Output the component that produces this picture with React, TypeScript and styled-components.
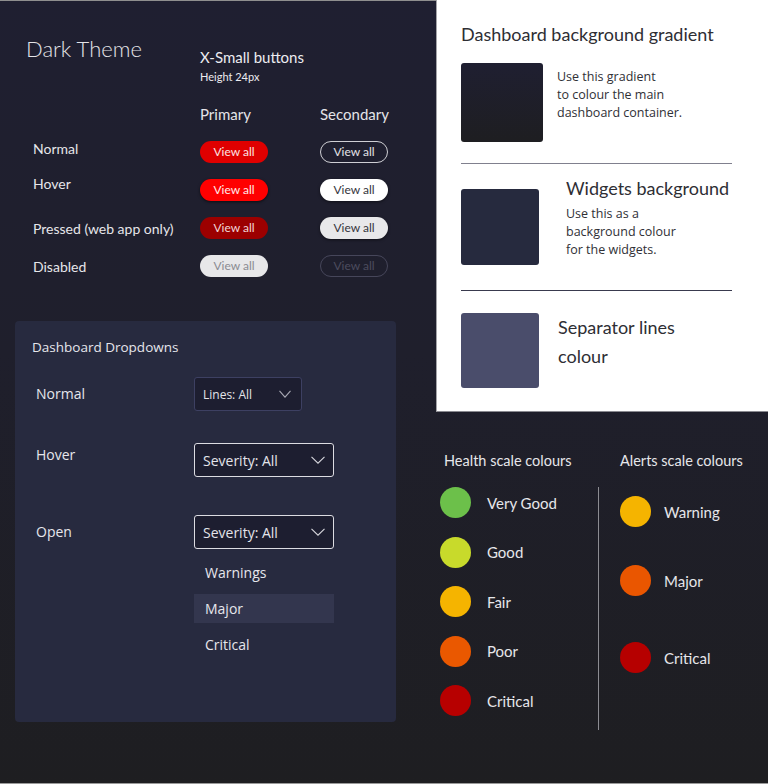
import { Fragment } from "react";
import styled, { createGlobalStyle, css } from "styled-components";

const GlobalStyle = createGlobalStyle`
  html, body {
    margin: 0;
    padding: 0;
  }
  body {
    width: 768px;
    height: 784px;
    overflow: hidden;
    font-family: Lato, "Liberation Sans", sans-serif;
  }
`;

const Page = styled.div`
  display: grid;
  grid-template-columns: 436px 332px;
  grid-template-rows: 412px 1fr;
  width: 768px;
  height: 784px;
  box-sizing: border-box;
  border-bottom: 1px solid #9a9a9a;
  background: linear-gradient(180deg, #1f1f31 0%, #1f1f2c 45%, #1e1e21 100%);
`;

const LeftColumn = styled.div`
  grid-row: 1 / 3;
  grid-column: 1;
  display: flex;
  flex-direction: column;
  border-top: 1px solid #8f8f8f;
`;

/* ---- buttons ---- */

const Header = styled.div`
  display: grid;
  grid-template-columns: 174px 1fr;
  padding: 35px 0 0 26px;
`;

const PageTitle = styled.h1`
  margin: 0;
  font-size: 22px;
  line-height: 26px;
  font-weight: 300;
  color: #e4e4e8;
`;

const SubBlock = styled.div`
  margin-top: 12px;
  color: #ececf0;
`;

const SubTitle = styled.div`
  font-size: 15px;
  line-height: 18px;
`;

const SubNote = styled.div`
  margin-top: 4px;
  font-size: 11px;
  line-height: 14px;
`;

const ButtonGrid = styled.div`
  display: grid;
  grid-template-columns: 174px 120px 120px;
  grid-template-rows: auto;
  grid-auto-rows: 22px;
  row-gap: 16px;
  padding-left: 26px;
`;

const ColumnHead = styled.div`
  margin: 21px 0 2px;
  font-size: 15px;
  line-height: 18px;
  color: #e4e4e8;
`;

const StateLabel = styled.div<{ $top: number }>`
  margin-top: ${(p) => p.$top}px;
  padding-left: 7px;
  font-size: 14px;
  line-height: 18px;
  white-space: nowrap;
  color: #e6e6ea;
`;

type Variant = "primary" | "secondary";
type BtnState = "normal" | "hover" | "pressed" | "disabled";

const buttonLooks: Record<Variant, Record<BtnState, ReturnType<typeof css>>> = {
  primary: {
    normal: css`
      background: #e00000;
      color: #fbe3e3;
    `,
    hover: css`
      background: #ff0000;
      color: #ffe9e9;
      box-shadow: 0 1px 3px rgba(0, 0, 0, 0.6);
    `,
    pressed: css`
      background: #9c0000;
      color: #f1d6d6;
    `,
    disabled: css`
      background: #e7e7e9;
      color: #8b8b92;
    `,
  },
  secondary: {
    normal: css`
      background: transparent;
      border: 1px solid #cfcfd4;
      color: #e2e2e6;
    `,
    hover: css`
      background: #ffffff;
      color: #35353d;
      box-shadow: 0 1px 3px rgba(0, 0, 0, 0.5);
    `,
    pressed: css`
      background: #e8e8ea;
      color: #35353d;
      box-shadow: 0 1px 3px rgba(0, 0, 0, 0.5);
    `,
    disabled: css`
      background: transparent;
      border: 1px solid #46465a;
      color: #4c4c5e;
    `,
  },
};

const ViewButton = styled.button<{ $variant: Variant; $state: BtnState }>`
  box-sizing: border-box;
  width: 68px;
  height: 22px;
  padding: 0;
  border: none;
  border-radius: 11px;
  font-family: Lato, "Liberation Sans", sans-serif;
  font-size: 12px;
  line-height: 20px;
  cursor: pointer;
  ${(p) => buttonLooks[p.$variant][p.$state]}
`;

/* ---- dropdowns ---- */

const DropPanel = styled.section`
  box-sizing: border-box;
  width: 381px;
  height: 401px;
  margin: 44px 0 0 15px;
  padding: 16px 0 0 0;
  border-radius: 4px;
  background: #272a3f;
  font-family: "Open Sans", "Liberation Sans", sans-serif;
  color: #e6e6ec;
`;

const PanelTitle = styled.div`
  padding-left: 17px;
  font-size: 13.5px;
  line-height: 20px;
`;

const DropRow = styled.div<{ $gap: number }>`
  display: grid;
  grid-template-columns: 158px 140px;
  align-items: center;
  margin-top: ${(p) => p.$gap}px;
  padding-left: 21px;
`;

const DropLabel = styled.div<{ $raise?: number }>`
  font-size: 14px;
  line-height: 20px;
  margin-bottom: ${(p) => (p.$raise ?? 0) * 2}px;
`;

const Dropdown = styled.div<{ $w: number; $active?: boolean; $size: number }>`
  box-sizing: border-box;
  display: flex;
  align-items: center;
  justify-content: space-between;
  width: ${(p) => p.$w}px;
  height: 34px;
  padding: 0 ${(p) => (p.$active ? 8 : 10)}px 0 8px;
  border: 1px solid ${(p) => (p.$active ? "#dcdce2" : "#3d4062")};
  border-radius: 3px;
  background: #1d1e30;
  font-size: ${(p) => p.$size}px;
  color: #e4e4ea;
`;

const OptionList = styled.div`
  grid-column: 2;
  display: flex;
  flex-direction: column;
  gap: 7px;
  margin-top: 9px;
`;

const Option = styled.div<{ $selected?: boolean }>`
  height: 29px;
  padding-left: 11px;
  font-size: 14px;
  line-height: 29px;
  background: ${(p) => (p.$selected ? "#33364e" : "transparent")};
`;

const Chevron = ({ w, color }: { w: number; color: string }) => (
  <svg width={w} height={8} viewBox={`0 0 ${w} 8`} fill="none">
    <polyline
      points={`0.5,0.8 ${w / 2},7.2 ${w - 0.5},0.8`}
      stroke={color}
      strokeWidth="1.1"
    />
  </svg>
);

/* ---- white swatch panel ---- */

const SwatchPanel = styled.section`
  grid-column: 2;
  grid-row: 1;
  box-sizing: border-box;
  padding: 23px 0 0 24px;
  background: #ffffff;
  border-left: 1px solid #a4a4a8;
  border-bottom: 1px solid #8a8a90;
  color: #2e2e34;
`;

const SwatchTitle = styled.div<{ $lh?: number }>`
  font-size: 18px;
  line-height: ${(p) => p.$lh ?? 22}px;
`;

const SwatchRow = styled.div<{ $gap: number; $top: number }>`
  display: flex;
  align-items: flex-start;
  gap: ${(p) => p.$gap}px;
  margin-top: ${(p) => p.$top}px;
`;

const Swatch = styled.div<{ $w: number; $h: number; $bg: string; $offset?: number }>`
  flex: none;
  width: ${(p) => p.$w}px;
  height: ${(p) => p.$h}px;
  margin-top: ${(p) => p.$offset ?? 0}px;
  border-radius: 3px;
  background: ${(p) => p.$bg};
`;

const SwatchText = styled.div<{ $top?: number }>`
  margin-top: ${(p) => p.$top ?? 0}px;
  font-family: "Open Sans", "Liberation Sans", sans-serif;
  font-size: 12.5px;
  line-height: 18px;
  color: #303036;
`;

const Rule = styled.div<{ $color: string; $top: number }>`
  width: 271px;
  height: 1px;
  margin-top: ${(p) => p.$top}px;
  background: ${(p) => p.$color};
`;

/* ---- scale colours ---- */

const ScaleArea = styled.section`
  grid-column: 2;
  grid-row: 2;
  display: grid;
  grid-template-columns: 158px 1px 1fr;
  grid-template-rows: 20px auto;
  row-gap: 16px;
  padding: 39px 0 0 4px;
  color: #e6e6ea;
`;

const ScaleHead = styled.div<{ $pad: number }>`
  padding-left: ${(p) => p.$pad}px;
  font-size: 14.5px;
  line-height: 20px;
  white-space: nowrap;
`;

const Divider = styled.div`
  width: 1px;
  height: 243px;
  background: #8c8c92;
`;

const HealthList = styled.div`
  display: flex;
  flex-direction: column;
  gap: 18.5px;
`;

const AlertList = styled.div`
  display: flex;
  flex-direction: column;
  padding: 9px 0 0 21px;
`;

const ScaleItem = styled.div<{ $top?: number; $gap: number }>`
  display: flex;
  align-items: center;
  gap: ${(p) => p.$gap}px;
  margin-top: ${(p) => p.$top ?? 0}px;
  font-size: 15px;
`;

const Dot = styled.span<{ $color: string }>`
  flex: none;
  width: 31px;
  height: 31px;
  border-radius: 50%;
  background: ${(p) => p.$color};
`;

const rows: { label: string; top: number; state: BtnState }[] = [
  { label: "Normal", top: -1, state: "normal" },
  { label: "Hover", top: -4, state: "hover" },
  { label: "Pressed (web app only)", top: 3, state: "pressed" },
  { label: "Disabled", top: 3, state: "disabled" },
];

const health = [
  { label: "Very Good", color: "#6cc04a" },
  { label: "Good", color: "#c8da2b" },
  { label: "Fair", color: "#f5b400" },
  { label: "Poor", color: "#ea5800" },
  { label: "Critical", color: "#b70000" },
];

const alerts = [
  { label: "Warning", color: "#f5b400", top: 0 },
  { label: "Major", color: "#ea5600", top: 38 },
  { label: "Critical", color: "#b60000", top: 46 },
];

export default function App() {
  return (
    <>
      <GlobalStyle />
      <Page>
        <LeftColumn>
          <Header>
            <PageTitle>Dark Theme</PageTitle>
            <SubBlock>
              <SubTitle>X-Small buttons</SubTitle>
              <SubNote>Height 24px</SubNote>
            </SubBlock>
          </Header>
          <ButtonGrid>
            <div />
            <ColumnHead>Primary</ColumnHead>
            <ColumnHead>Secondary</ColumnHead>
            {rows.map((r) => (
              <Fragment key={r.label}>
                <StateLabel $top={r.top}>{r.label}</StateLabel>
                <ViewButton $variant="primary" $state={r.state}>
                  View all
                </ViewButton>
                <ViewButton $variant="secondary" $state={r.state}>
                  View all
                </ViewButton>
              </Fragment>
            ))}
          </ButtonGrid>

          <DropPanel>
            <PanelTitle>Dashboard Dropdowns</PanelTitle>
            <DropRow $gap={20}>
              <DropLabel>Normal</DropLabel>
              <Dropdown $w={108} $size={12}>
                Lines: All
                <Chevron w={12} color="#a9a9b4" />
              </Dropdown>
            </DropRow>
            <DropRow $gap={32}>
              <DropLabel $raise={5}>Hover</DropLabel>
              <Dropdown $w={140} $size={14} $active>
                Severity: All
                <Chevron w={14} color="#d6d6dc" />
              </Dropdown>
            </DropRow>
            <DropRow $gap={38}>
              <DropLabel>Open</DropLabel>
              <Dropdown $w={140} $size={14} $active>
                Severity: All
                <Chevron w={14} color="#d6d6dc" />
              </Dropdown>
              <OptionList>
                <Option>Warnings</Option>
                <Option $selected>Major</Option>
                <Option>Critical</Option>
              </OptionList>
            </DropRow>
          </DropPanel>
        </LeftColumn>

        <SwatchPanel>
          <SwatchTitle>Dashboard background gradient</SwatchTitle>
          <SwatchRow $gap={14} $top={18}>
            <Swatch $w={82} $h={79} $bg="linear-gradient(180deg, #1f1f31, #1e1e21)" />
            <SwatchText $top={5}>
              Use this gradient
              <br />
              to colour the main
              <br />
              dashboard container.
            </SwatchText>
          </SwatchRow>
          <Rule $color="#80808e" $top={21} />
          <SwatchRow $gap={27} $top={13}>
            <Swatch $w={78} $h={76} $bg="#262a3e" $offset={12} />
            <div>
              <SwatchTitle>Widgets background</SwatchTitle>
              <SwatchText $top={6}>
                Use this as a
                <br />
                background colour
                <br />
                for the widgets.
              </SwatchText>
            </div>
          </SwatchRow>
          <Rule $color="#393a4e" $top={25} />
          <SwatchRow $gap={19} $top={22}>
            <Swatch $w={78} $h={75} $bg="#4a4d6b" />
            <SwatchTitle $lh={29}>
              Separator lines
              <br />
              colour
            </SwatchTitle>
          </SwatchRow>
        </SwatchPanel>

        <ScaleArea>
          <ScaleHead $pad={4}>Health scale colours</ScaleHead>
          <div />
          <ScaleHead $pad={21}>Alerts scale colours</ScaleHead>
          <HealthList>
            {health.map((h) => (
              <ScaleItem key={h.label} $gap={16}>
                <Dot $color={h.color} />
                {h.label}
              </ScaleItem>
            ))}
          </HealthList>
          <Divider />
          <AlertList>
            {alerts.map((a) => (
              <ScaleItem key={a.label} $gap={13} $top={a.top}>
                <Dot $color={a.color} />
                {a.label}
              </ScaleItem>
            ))}
          </AlertList>
        </ScaleArea>
      </Page>
    </>
  );
}
